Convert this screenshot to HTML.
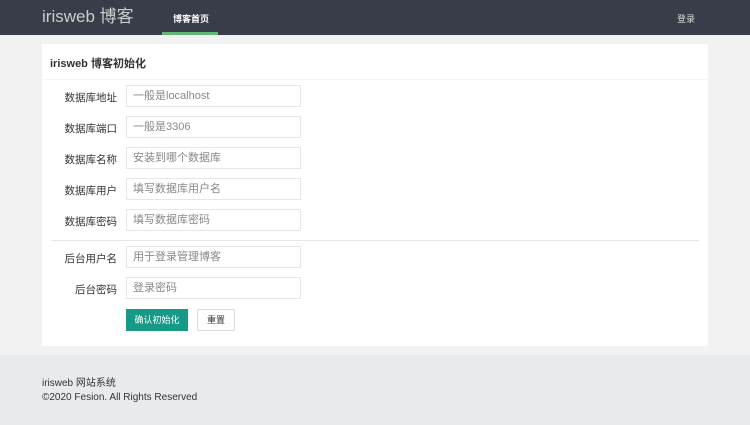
<!DOCTYPE html>
<html><head><meta charset="utf-8"><style>
*{margin:0;padding:0;box-sizing:border-box}
body{width:750px;height:425px;background:#f2f2f2;font-family:"Liberation Sans","Noto Sans CJK SC",sans-serif;position:relative;overflow:hidden;color:#333}
.hd{position:absolute;left:0;top:0;width:750px;height:35px;background:#393d49}
.logo{position:absolute;left:42px;top:7px;color:#ccc;font-size:17px;line-height:20px}
.nav{position:absolute;left:173px;top:12px;color:#fff;font-size:9px;font-weight:bold}
.bar{position:absolute;left:162px;top:32px;width:56px;height:3px;background:#5fb878}
.login{position:absolute;left:677px;top:12px;color:#ddd;font-size:9px}
.card{position:absolute;left:42px;top:44px;width:666px;height:302px;background:#fff}
.title{position:absolute;left:8px;top:11px;font-size:11px;font-weight:bold;color:#333}
.tl{position:absolute;left:0;top:35px;width:666px;height:1px;background:#f4f4f4}
.lab{position:absolute;width:75px;text-align:right;font-size:10.5px;color:#333}
.in{position:absolute;left:84px;width:175px;height:22px;border:1px solid #e6e6e6;font-size:11px;color:#888;padding:4px 6px;line-height:12px}
.hr{position:absolute;left:10px;top:196px;width:647px;height:1px;background:#e6e6e6}
.b1{position:absolute;left:84px;top:265px;width:62px;height:22px;background:#169a87;color:#fff;font-size:9px;text-align:center;line-height:22px}
.b2{position:absolute;left:155px;top:265px;width:38px;height:22px;border:1px solid #ddd;color:#333;font-size:9px;text-align:center;line-height:20px}
.ft{position:absolute;left:0;top:355px;width:750px;height:70px;background:#e8ebee;font-size:10px;color:#333}
</style></head><body>
<div class="hd"><div class="logo">irisweb 博客</div><div class="nav">博客首页</div><div class="bar"></div><div class="login">登录</div></div>
<div class="card">
<div class="title">irisweb 博客初始化</div><div class="tl"></div>
<div class="lab" style="top:46px">数据库地址</div><div class="in" style="top:41px">一般是localhost</div>
<div class="lab" style="top:77px">数据库端口</div><div class="in" style="top:72px">一般是3306</div>
<div class="lab" style="top:108px">数据库名称</div><div class="in" style="top:103px">安装到哪个数据库</div>
<div class="lab" style="top:139px">数据库用户</div><div class="in" style="top:134px">填写数据库用户名</div>
<div class="lab" style="top:170px">数据库密码</div><div class="in" style="top:165px">填写数据库密码</div>
<div class="hr"></div>
<div class="lab" style="top:207px">后台用户名</div><div class="in" style="top:202px">用于登录管理博客</div>
<div class="lab" style="top:238px">后台密码</div><div class="in" style="top:233px">登录密码</div>
<div class="b1">确认初始化</div><div class="b2">重置</div>
</div>
<div class="ft"><div style="position:absolute;left:42px;top:19px">irisweb 网站系统</div><div style="position:absolute;left:42px;top:37px">©2020 Fesion. All Rights Reserved</div></div>
</body></html>
